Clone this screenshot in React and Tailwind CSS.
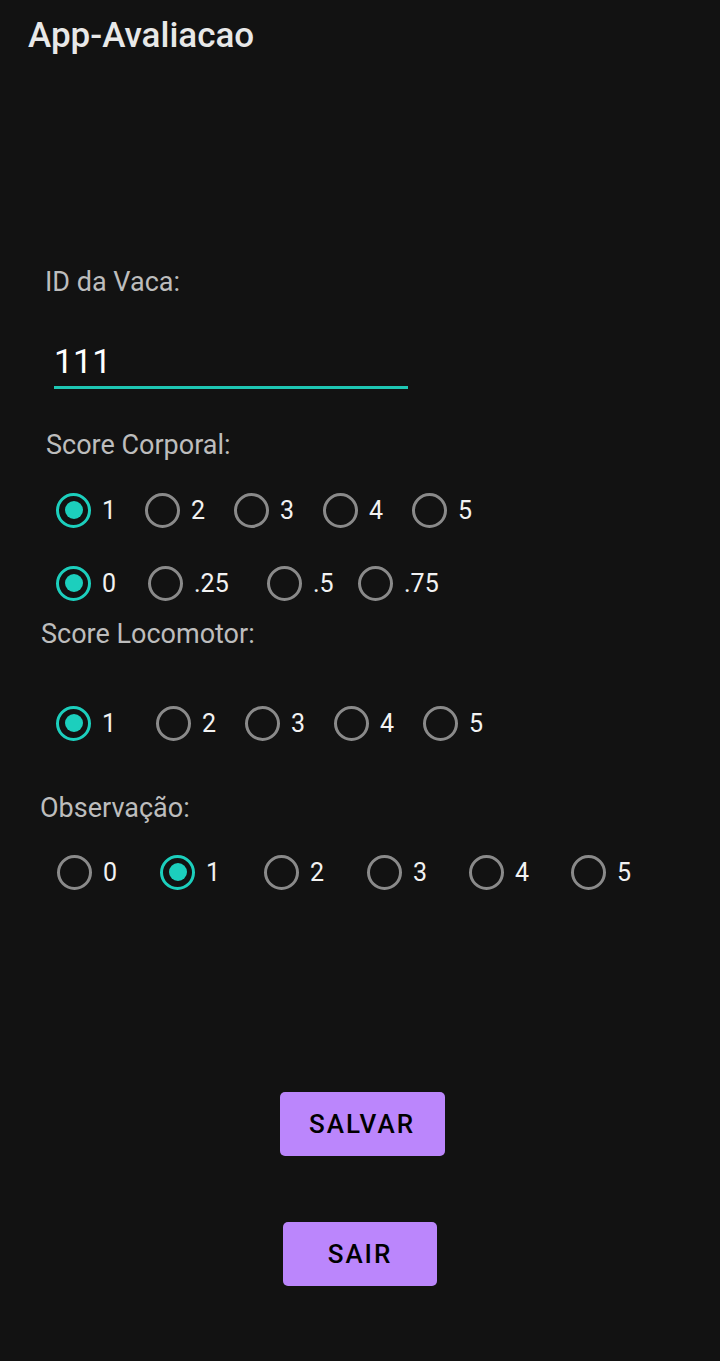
import { useState } from 'react';

const TEAL = 'border-[#1ccfbd]';

function Radio({ label, checked, onClick, width }) {
  return (
    <button type="button" onClick={onClick} className={`flex items-center gap-[11px] h-[36px] ${width}`}>
      <span
        className={`flex items-center justify-center w-[35px] h-[35px] rounded-full border-[3px] ${
          checked ? TEAL : 'border-[#8a8a8a]'
        }`}
      >
        {checked && <span className="w-[18px] h-[18px] rounded-full bg-[#1ccfbd]" />}
      </span>
      <span className="text-[25px] leading-none text-[#f2f2f2]">{label}</span>
    </button>
  );
}

function RadioRow({ options, widths, value, onChange, className }) {
  return (
    <div className={`flex items-center ${className}`}>
      {options.map((opt, i) => (
        <Radio
          key={opt}
          label={opt}
          width={widths[i] || ''}
          checked={value === opt}
          onClick={() => onChange(opt)}
        />
      ))}
    </div>
  );
}

export default function App() {
  const [id, setId] = useState('111');
  const [corporal, setCorporal] = useState('1');
  const [fracao, setFracao] = useState('0');
  const [locomotor, setLocomotor] = useState('1');
  const [obs, setObs] = useState('1');

  return (
    <div className="min-h-screen bg-[#121212] font-['Roboto',sans-serif] pb-10">
      <div className="pt-[16px] pl-[28px] h-[56px]">
        <h1 className="text-[35px] leading-[40px] font-medium text-[#e8e8e8]">App-Avaliacao</h1>
      </div>

      <p className="mt-[210px] ml-[45px] text-[27px] leading-[32px] text-[#bdbdbd]">ID da Vaca:</p>

      <div className="mt-[43px] ml-[54px] w-[354px] pb-[5px] border-b-[3px] border-[#1ec6b3]">
        <input
          value={id}
          onChange={(e) => setId(e.target.value)}
          className="w-full bg-transparent text-[34px] leading-[40px] h-[40px] text-white outline-none"
        />
      </div>

      <p className="mt-[40px] ml-[46px] text-[27px] leading-[32px] text-[#bdbdbd]">Score Corporal:</p>

      <RadioRow
        className="mt-[31px] ml-[56px]"
        options={['1', '2', '3', '4', '5']}
        widths={['w-[89px]', 'w-[89px]', 'w-[89px]', 'w-[89px]']}
        value={corporal}
        onChange={setCorporal}
      />

      <RadioRow
        className="mt-[37px] ml-[56px]"
        options={['0', '.25', '.5', '.75']}
        widths={['w-[92px]', 'w-[119px]', 'w-[91px]']}
        value={fracao}
        onChange={setFracao}
      />

      <p className="mt-[17px] ml-[41px] text-[27px] leading-[32px] text-[#bdbdbd]">Score Locomotor:</p>

      <RadioRow
        className="mt-[55px] ml-[56px]"
        options={['1', '2', '3', '4', '5']}
        widths={['w-[100px]', 'w-[89px]', 'w-[89px]', 'w-[89px]']}
        value={locomotor}
        onChange={setLocomotor}
      />

      <p className="mt-[51px] ml-[40px] text-[27px] leading-[32px] text-[#bdbdbd]">Observação:</p>

      <RadioRow
        className="mt-[30px] ml-[57px]"
        options={['0', '1', '2', '3', '4', '5']}
        widths={['w-[103px]', 'w-[104px]', 'w-[103px]', 'w-[102px]', 'w-[102px]']}
        value={obs}
        onChange={setObs}
      />

      <div className="flex flex-col items-center">
        <button className="mt-[202px] ml-[4px] w-[165px] h-[64px] rounded-[5px] bg-[#bb86fc] text-[26px] font-medium tracking-[2px] text-black">
          SALVAR
        </button>
        <button className="mt-[66px] w-[154px] h-[64px] rounded-[5px] bg-[#bb86fc] text-[26px] font-medium tracking-[2px] text-black">
          SAIR
        </button>
      </div>
    </div>
  );
}
